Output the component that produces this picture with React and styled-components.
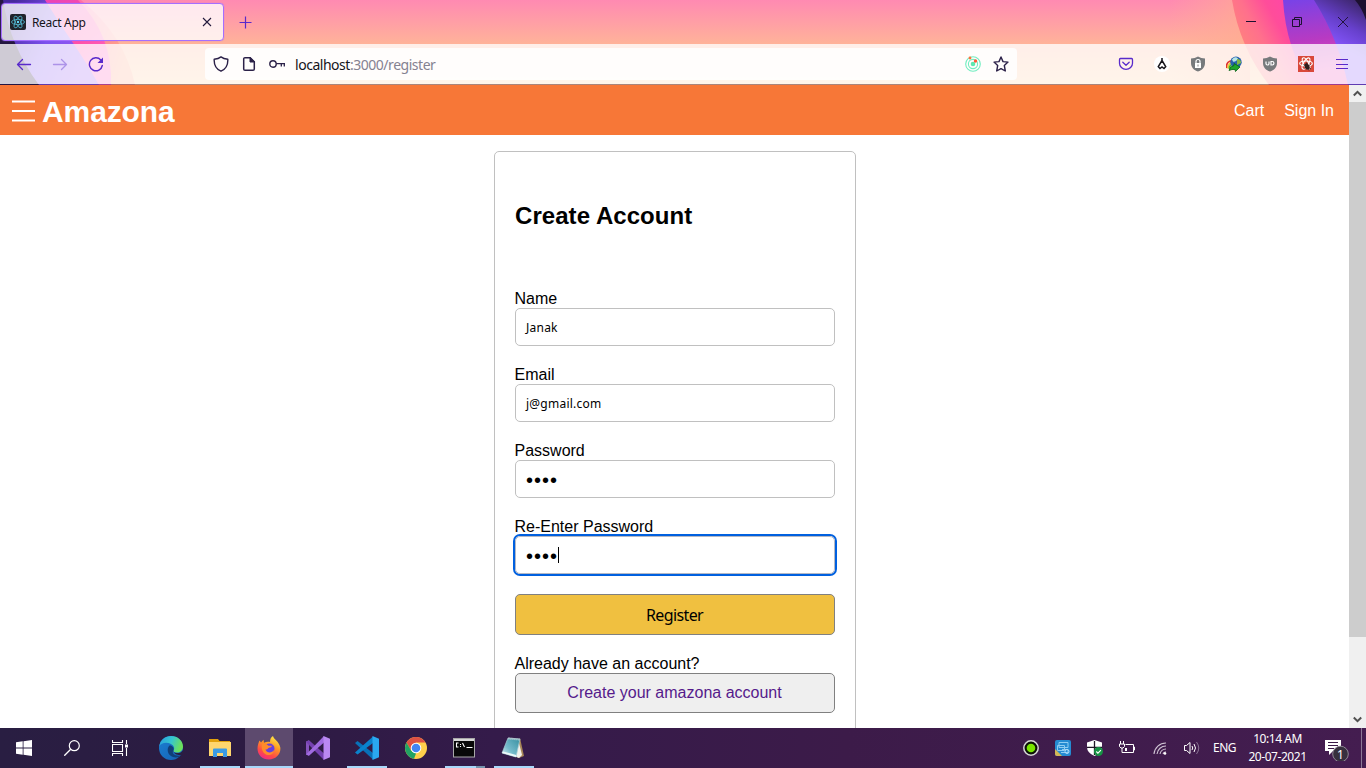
import React from "react";
import styled, { createGlobalStyle } from "styled-components";

const Global = createGlobalStyle`
  *, *::before, *::after { box-sizing: border-box; }
  html, body { margin: 0; padding: 0; overflow: hidden; }
  svg { display: block; flex: none; }
`;

const ui = `"Noto Sans", "Open Sans", sans-serif`;
const arial = `"Liberation Sans", Arial, sans-serif`;

const Screen = styled.div`
  width: 1366px;
  height: 768px;
  display: flex;
  flex-direction: column;
  overflow: hidden;
  background: #fff;
  font-family: ${arial};
`;

/* ---------- browser chrome ---------- */
const Chrome = styled.header`
  position: relative;
  height: 85px;
  flex: none;
  display: flex;
  flex-direction: column;
  font-family: ${ui};
  isolation: isolate;
`;
const Backdrop = styled.svg`
  position: absolute;
  inset: 0;
  z-index: -1;
`;
const TabStrip = styled.div`
  height: 44px;
  display: flex;
  align-items: center;
  padding-left: 1px;
`;
const Tab = styled.div`
  width: 223px;
  height: 38px;
  display: flex;
  align-items: center;
  padding: 0 10px 0 8px;
  border: 1px solid #a56eff;
  border-radius: 4px;
  background: rgba(255, 255, 255, 0.8);
  box-shadow: 0 0 1px #a56eff;
`;
const TabTitle = styled.span`
  flex: 1;
  margin-left: 6px;
  font-size: 12px;
  letter-spacing: -0.35px;
  color: #15141a;
`;
const NewTab = styled.div`
  margin-left: 15px;
`;
const WindowButtons = styled.div`
  margin-left: auto;
  display: flex;
`;
const WindowButton = styled.div`
  width: 46px;
  height: 44px;
  display: flex;
  align-items: center;
  justify-content: center;
`;
const Toolbar = styled.div`
  height: 41px;
  display: flex;
  align-items: center;
  padding: 0 8px;
  border-bottom: 1px solid rgba(40, 20, 70, 0.4);
  background: rgba(255, 255, 255, 0.78);
  background-clip: padding-box;
`;
const NavButtons = styled.div`
  display: flex;
  width: 197px;
`;
const NavButton = styled.div`
  width: 32px;
  height: 32px;
  margin-right: 4px;
  display: flex;
  align-items: center;
  justify-content: center;
  opacity: ${(p) => (p.$dim ? 0.4 : 1)};
`;
const AddressBar = styled.div`
  width: 812px;
  height: 32px;
  display: flex;
  align-items: center;
  padding: 0 8px;
  border-radius: 4px;
  background: rgba(255, 255, 255, 0.84);
`;
const IdentityIcons = styled.div`
  display: flex;
  gap: 12px;
  margin-right: 10px;
`;
const Url = styled.span`
  flex: 1;
  padding-top: 1px;
  font-size: 14px;
  letter-spacing: -0.47px;
  color: #15141a;
`;
const UrlPath = styled.span`
  color: #858291;
`;
const AddressActions = styled.div`
  display: flex;
  gap: 12px;
`;
const Extensions = styled.div`
  margin-left: auto;
  display: flex;
`;
const Extension = styled.div`
  width: 36px;
  height: 32px;
  display: flex;
  align-items: center;
  justify-content: center;
`;
const MenuButton = styled(Extension)`
  margin-right: -2px;
`;

/* ---------- page ---------- */
const Viewport = styled.div`
  flex: 1;
  min-height: 0;
  display: flex;
`;
const Page = styled.div`
  flex: 1;
  display: flex;
  flex-direction: column;
  overflow: hidden;
`;
const SiteHeader = styled.div`
  height: 50px;
  flex: none;
  display: flex;
  align-items: center;
  padding: 2px 15px 0 12px;
  background: #f77737;
  color: #fff;
`;
const Brand = styled.span`
  margin: 2px 0 0 7px;
  font-size: 30px;
  font-weight: bold;
  line-height: 36px;
  letter-spacing: -0.1px;
`;
const SiteLinks = styled.nav`
  margin-left: auto;
  display: flex;
  gap: 20px;
  font-size: 16px;
`;
const Main = styled.main`
  display: flex;
  justify-content: center;
  padding: 16px 0 0 1px;
`;
const Card = styled.form`
  width: 362px;
  height: 650px;
  flex: none;
  padding: 50px 20px 0;
  border: 1px solid #c0c0c0;
  border-radius: 5px;
  color: #000;
`;
const Title = styled.h1`
  margin: 0 0 60px;
  font-size: 24px;
  line-height: 28px;
  letter-spacing: 0.06px;
`;
const Field = styled.div`
  margin-bottom: 20px;
`;
const Label = styled.div`
  margin-left: -0.5px;
  font-size: 16px;
  line-height: 18px;
`;
const Input = styled.div`
  height: 38px;
  display: flex;
  align-items: center;
  padding: 0 10px;
  border: 1px solid ${(p) => (p.$focused ? "#b4b8c4" : "#c0c0c0")};
  border-radius: 5px;
  box-shadow: ${(p) => (p.$focused ? "0 0 0 2px #0060df" : "none")};
  font-family: ${ui};
  font-size: 12px;
  letter-spacing: 0.24px;
`;
const Dots = styled.span`
  padding-top: 1px;
  font-family: ${arial};
  font-size: 20px;
  line-height: 20px;
  letter-spacing: 1px;
`;
const Caret = styled.span`
  width: 1px;
  height: 16px;
  background: #000;
`;
const Button = styled.div`
  height: ${(p) => (p.$primary ? 41 : 40)}px;
  display: flex;
  align-items: center;
  justify-content: center;
  padding: ${(p) => (p.$primary ? "0 1px 0 0" : "0 1px 0 0")};
  border: 1px solid #808080;
  border-radius: 5px;
  background: ${(p) => (p.$primary ? "#f0c040" : "#efefef")};
  color: ${(p) => (p.$primary ? "#000" : "#551a8b")};
  font-family: ${(p) => (p.$primary ? ui : arial)};
  font-size: 16px;
  letter-spacing: ${(p) => (p.$primary ? "-0.6px" : "0")};
`;
const Scrollbar = styled.div`
  width: 17px;
  display: flex;
  flex-direction: column;
  justify-content: space-between;
  background: #f0f0f0;
`;
const ScrollArrow = styled.div`
  height: 17px;
  display: flex;
  align-items: center;
  justify-content: center;
`;
const Thumb = styled.div`
  height: 535px;
  margin-bottom: auto;
  background: #cdcdcd;
`;

/* ---------- taskbar ---------- */
const Taskbar = styled.footer`
  height: 40px;
  flex: none;
  display: flex;
  background: linear-gradient(90deg, #291e42 0%, #2c1b42 18%, #341b4a 36%, #3c1b49 62%, #441d50 100%);
  color: #fff;
  font-family: ${ui};
`;
const SystemButtons = styled.div`
  display: flex;
  margin-right: 3px;
`;
const Apps = styled.div`
  display: flex;
  gap: 1px;
`;
const TaskButton = styled.div`
  position: relative;
  width: 48px;
  height: 40px;
  display: flex;
  align-items: center;
  justify-content: center;
  background: ${(p) => (p.$active ? "#5d4a6e" : "transparent")};
`;
const Underline = styled.span`
  position: absolute;
  bottom: 0;
  left: ${(p) => (p.$full ? 0 : 4)}px;
  right: ${(p) => (p.$full ? 0 : 4)}px;
  height: 2px;
  background: ${(p) => (p.$stacked ? "linear-gradient(90deg, #a8d8fa 31px, #7593ad 31px)" : "#a8d8fa")};
`;
const Tray = styled.div`
  margin-left: auto;
  display: flex;
  align-items: center;
`;
const TrayItem = styled.div`
  width: ${(p) => p.$w || 32}px;
  height: 40px;
  display: flex;
  align-items: center;
  justify-content: center;
`;
const Language = styled.div`
  width: 35px;
  padding-bottom: 1px;
  text-align: center;
  font-size: 12px;
  letter-spacing: -0.5px;
`;
const Clock = styled.div`
  width: 71px;
  text-align: center;
  font-size: 12px;
  line-height: 18px;
  letter-spacing: -0.45px;
`;
const ShowDesktop = styled.div`
  width: 5px;
  height: 40px;
  border-left: 1px solid #8c7895;
`;

const ink = "#2b2148";
const violet = "#592acb";

const Svg = ({ s = 16, w = s, h = s, children, ...rest }) => (
  <svg width={w} height={h} viewBox={`0 0 ${w} ${h}`} fill="none" {...rest}>{children}</svg>
);

const ChromeArt = () => (
  <Backdrop width="1366" height="85" viewBox="0 0 1366 85">
    <defs>
      <linearGradient id="sky" x1="0" y1="0" x2="0" y2="1">
        <stop offset="0" stopColor="#ff8ab2" /><stop offset=".52" stopColor="#ffb399" /><stop offset="1" stopColor="#ffd0a0" />
      </linearGradient>
      <linearGradient id="salmonL" gradientUnits="userSpaceOnUse" x1="75" y1="30" x2="130" y2="50">
        <stop offset="0" stopColor="#ff6fa6" /><stop offset=".6" stopColor="#ff9290" /><stop offset="1" stopColor="#ffa988" />
      </linearGradient>
      <linearGradient id="pinkL" gradientUnits="userSpaceOnUse" x1="55" y1="0" x2="105" y2="60">
        <stop offset="0" stopColor="#ec45b4" /><stop offset=".6" stopColor="#ff4fa8" /><stop offset="1" stopColor="#ff62c0" />
      </linearGradient>
      <linearGradient id="violetL" gradientUnits="userSpaceOnUse" x1="5" y1="20" x2="90" y2="60">
        <stop offset="0" stopColor="#45289c" /><stop offset=".5" stopColor="#7c50ee" /><stop offset="1" stopColor="#9c5cf2" />
      </linearGradient>
      <linearGradient id="glow" x1="0" y1="0" x2="1" y2="0">
        <stop offset="0" stopColor="#ffad96" stopOpacity="0" /><stop offset="1" stopColor="#ffac90" stopOpacity=".8" />
      </linearGradient>
      <linearGradient id="salmonR" gradientUnits="userSpaceOnUse" x1="1238" y1="34" x2="1284" y2="8">
        <stop offset="0" stopColor="#ff7f80" /><stop offset=".35" stopColor="#ff708c" /><stop offset=".75" stopColor="#ff4d9a" /><stop offset="1" stopColor="#ff49a2" />
      </linearGradient>
      <linearGradient id="violetR" gradientUnits="userSpaceOnUse" x1="1295" y1="0" x2="1305" y2="75">
        <stop offset="0" stopColor="#7a42e6" /><stop offset=".55" stopColor="#b83ac2" /><stop offset="1" stopColor="#ed54bc" />
      </linearGradient>
      <linearGradient id="deepR" gradientUnits="userSpaceOnUse" x1="1358" y1="0" x2="1334" y2="44">
        <stop offset="0" stopColor="#3b2568" /><stop offset=".55" stopColor="#6740cc" /><stop offset="1" stopColor="#8455fa" />
      </linearGradient>
    </defs>
    <rect width="1366" height="85" fill="url(#sky)" />
    <path d="M0 0H81Q125 36 135 85H0Z" fill="url(#salmonL)" />
    <path d="M0 0H78Q113 36 111 85H0Z" fill="url(#pinkL)" />
    <path d="M0 0H45Q60 24 73 43T99 85H0Z" fill="url(#violetL)" />
    <path d="M0 0H3Q10 46 39 85H0Z" fill="#241640" />
    <rect x="1170" width="80" height="85" fill="url(#glow)" />
    <path d="M1232 0Q1240 48 1269 85H1366V0Z" fill="url(#salmonR)" />
    <path d="M1283 0Q1286 50 1311 85H1366V0Z" fill="url(#violetR)" />
    <path d="M1314 0Q1338 38 1348 85H1366V0Z" fill="url(#deepR)" />
    <path d="M1355 0Q1362 8 1366 20V0Z" fill="#1c1030" />
  </Backdrop>
);

const ReactIcon = () => (
  <Svg>
    <rect width="16" height="16" rx="2" fill="#20232a" />
    <g stroke="#53b9d2" strokeWidth=".8">
      <ellipse cx="8" cy="8" rx="6.5" ry="2.6" />
      <ellipse cx="8" cy="8" rx="6.5" ry="2.6" transform="rotate(60 8 8)" />
      <ellipse cx="8" cy="8" rx="6.5" ry="2.6" transform="rotate(120 8 8)" />
    </g>
    <circle cx="8" cy="8" r="1.2" fill="#61dafb" />
  </Svg>
);

const shieldPath = "M8 .6C10 1.9 12.500 2.400 15 2.500V7c0 4-3 7.500-7 8.600C4 14.500 1 11 1 7V2.500C3.500 2.400 6 1.900 8 .6Z";

function BrowserChrome() {
  return (
    <Chrome>
      <ChromeArt />
      <TabStrip>
        <Tab>
          <ReactIcon />
          <TabTitle>React App</TabTitle>
          <Svg s={12}><path d="M2 2l8 8M10 2l-8 8" stroke="#241a3c" strokeWidth="1.1" /></Svg>
        </Tab>
        <NewTab><Svg s={14}><path d="M6.500 1.500v12M.5 7.500h12" stroke={violet} strokeWidth="1.200" /></Svg></NewTab>
        <WindowButtons>
          <WindowButton><Svg s={10}><path d="M0 4.500h10" stroke="#1c1030" /></Svg></WindowButton>
          <WindowButton><Svg s={10}><path d="M.5 2.500h7v7h-7zM2.500 2.500v-2h7v7h-2" stroke="#1c1030" /></Svg></WindowButton>
          <WindowButton><Svg s={10}><path d="M0 0l10 10M10 0L0 10" stroke="#1c1030" strokeWidth=".9" /></Svg></WindowButton>
        </WindowButtons>
      </TabStrip>
      <Toolbar>
        <NavButtons>
          <NavButton><Svg><path d="M14.500 8.500H1.500M6.500 3.500l-5 5 5 5" stroke={violet} strokeWidth="1.300" strokeLinecap="round" strokeLinejoin="round" /></Svg></NavButton>
          <NavButton $dim><Svg><path d="M1.500 8.500h13M9.500 3.500l5 5-5 5" stroke={violet} strokeWidth="1.300" strokeLinecap="round" strokeLinejoin="round" /></Svg></NavButton>
          <NavButton><Svg><path d="M14.300 9.500A6.500 6.500 0 1 1 12.800 4" stroke={violet} strokeWidth="1.400" strokeLinecap="round" /><path d="M15 1.500V7H9.500Z" fill={violet} /></Svg></NavButton>
        </NavButtons>
        <AddressBar>
          <IdentityIcons>
            <Svg><path d="M8 .9C10 2.500 12 3 14.800 3.200c.3 5.500-1.800 10-6.800 12-5-2-7.100-6.500-6.800-12C4 3 6 2.500 8 .9Z" stroke={ink} strokeWidth="1.400" strokeLinejoin="round" /></Svg>
            <Svg><path d="M4 1.700h5.200l4.100 4.100v7.200a1.300 1.300 0 0 1-1.300 1.300H4A1.300 1.300 0 0 1 2.700 13V3A1.300 1.300 0 0 1 4 1.700Z" stroke={ink} strokeWidth="1.500" /><path d="M9 1.500V6h4.500Z" fill={ink} stroke={ink} /></Svg>
            <Svg><circle cx="4" cy="8" r="3.200" stroke={ink} strokeWidth="1.400" /><path d="M7.200 7.600H16M15.300 7.600V10.500M12.300 7.600V10.500" stroke={ink} strokeWidth="1.300" /></Svg>
          </IdentityIcons>
          <Url>localhost<UrlPath>:3000/register</UrlPath></Url>
          <AddressActions>
            <Svg>
              <g stroke="#72edc0" strokeWidth="1.100"><circle cx="8" cy="8" r="7.300" /><circle cx="8" cy="8" r="4.600" /></g>
              <circle cx="8" cy="8" r="2.300" fill="#5ee8b0" /><circle cx="5" cy="2" r="1.400" fill="#ff7139" /><circle cx="10.500" cy="5" r="1.700" fill="#ff5c3a" />
            </Svg>
            <Svg><path d="M8 1l2 4.600 5 .5-3.700 3.400 1 5.500L8 12.600 3.700 15l1-5.500L1 6.100l5-.5Z" stroke={ink} strokeWidth="1.400" strokeLinejoin="round" /></Svg>
          </AddressActions>
        </AddressBar>
        <Extensions>
          <Extension><Svg><path d="M2.500 2.500h11A1.200 1.200 0 0 1 14.500 3.700v3.500a6.500 6.200 0 0 1-13 0V3.700A1.200 1.200 0 0 1 2.500 2.500ZM4.800 6.300L8 9.300l3.200-3" stroke={violet} strokeWidth="1.300" strokeLinecap="round" strokeLinejoin="round" /></Svg></Extension>
          <Extension><Svg><circle cx="8" cy="8" r="8" fill="#fff" /><path d="M8 2v3M8 4.500L4.300 10.700 6 12.500 8 11l2 1.500 1.700-1.800L8 4.500" stroke="#17161c" strokeWidth="1.500" /></Svg></Extension>
          <Extension><Svg><path d={shieldPath} fill="#777a7c" /><rect x="5" y="7" width="6" height="5" fill="#fff" /><path d="M6 7V5.500a2 2 0 0 1 4 0V7" stroke="#fff" strokeWidth="1.200" /><path d="M8 8.500v2" stroke="#888" /></Svg></Extension>
          <Extension>
            <Svg>
              <path d="M.8 12C-.2 7 3 4 8 5" stroke="#df332d" strokeWidth="1.700" /><path d="M2.200 12.500C1.500 9 4 6 8 6.500" stroke="#efcb31" strokeWidth="1.700" />
              <path d="M3.500 13C3 10 5 8 8 8" stroke="#3aae3a" strokeWidth="1.700" />
              <circle cx="10" cy="6.300" r="5.700" fill="#2862ac" /><path d="M6 3.500q3-4 6-1-2 4-5 3Z" fill="#b6e4e8" /><path d="M11 3q4 0 4 4l-4 2Z" fill="#83ba45" />
              <path d="M3 14.500Q4 10 8 9.500V7.500l6 3.500-4.500 4.500-.5-2q-3-.5-6 1Z" fill="#20a52b" stroke="#096218" strokeWidth=".8" />
            </Svg>
          </Extension>
          <Extension><Svg><path d={shieldPath} fill="#777a7c" /><path d="M4 5.500v2a1.500 1.500 0 0 0 3 0v-2M9 5.500v3.500h1.200a1.700 1.700 0 0 0 0-3.500Z" stroke="#fff" strokeWidth="1.200" /></Svg></Extension>
          <Extension>
            <Svg>
              <rect width="16" height="16" fill="#d9483b" />
              <g stroke="#fff" strokeWidth="1.100"><ellipse cx="8" cy="7.500" rx="6.300" ry="2.500" /><ellipse cx="8" cy="7.500" rx="6.300" ry="2.500" transform="rotate(60 8 7.500)" /><ellipse cx="8" cy="7.500" rx="6.300" ry="2.500" transform="rotate(120 8 7.500)" /></g>
              <ellipse cx="9" cy="10.500" rx="2.300" ry="3.300" fill="#30201d" transform="rotate(-25 9 10.500)" /><path d="M5.500 8.500l7.500 4.500M6.500 12.500l6-4M8.500 6.500l2.500 8" stroke="#30201d" strokeWidth=".8" />
            </Svg>
          </Extension>
          <MenuButton><Svg><path d="M2 3.500h12M2 8.500h12M2 12.500h12" stroke={violet} strokeWidth="1.200" /></Svg></MenuButton>
        </Extensions>
      </Toolbar>
    </Chrome>
  );
}

function PageView() {
  return (
    <Viewport>
      <Page>
        <SiteHeader>
          <Svg w={23} h={22}><path d="M0 1.500h23M0 11h23M0 20.500h23" stroke="#fff" strokeWidth="1.900" /></Svg>
          <Brand>Amazona</Brand>
          <SiteLinks><span>Cart</span><span>Sign In</span></SiteLinks>
        </SiteHeader>
        <Main>
          <Card>
            <Title>Create Account</Title>
            <Field><Label>Name</Label><Input>Janak</Input></Field>
            <Field><Label>Email</Label><Input>j@gmail.com</Input></Field>
            <Field><Label>Password</Label><Input><Dots>••••</Dots></Input></Field>
            <Field><Label>Re-Enter Password</Label><Input $focused><Dots>••••</Dots><Caret /></Input></Field>
            <Field><Button $primary>Register</Button></Field>
            <Label>Already have an account?</Label>
            <Button>Create your amazona account</Button>
          </Card>
        </Main>
      </Page>
      <Scrollbar>
        <ScrollArrow><Svg s={9}><path d="M.8 6.500L4.500 2.800l3.700 3.700" stroke="#505050" strokeWidth="2" /></Svg></ScrollArrow>
        <Thumb />
        <ScrollArrow><Svg s={9}><path d="M.8 2.500l3.700 3.700 3.700-3.700" stroke="#505050" strokeWidth="2" /></Svg></ScrollArrow>
      </Scrollbar>
    </Viewport>
  );
}

const EdgeIcon = () => (
  <Svg s={24}>
    <defs>
      <linearGradient id="eg" x1="0" y1="0" x2="1" y2=".3"><stop stopColor="#279be0" /><stop offset=".55" stopColor="#36c6cf" /><stop offset="1" stopColor="#6be05c" /></linearGradient>
      <linearGradient id="eb" x1="0" y1="0" x2="1" y2="1"><stop stopColor="#1b7fd2" /><stop offset="1" stopColor="#1561b4" /></linearGradient>
    </defs>
    <circle cx="12" cy="12" r="12" fill="url(#eb)" />
    <path d="M.2 10.500C1.200 4 6.200 0 12 0c7 0 12 5 12 10.500 0 4-3 6-6 6-2.500 0-4-1-3.500-2 1.500-2 .5-5-2.500-6.500C8 5.800 2 6.500.2 10.500Z" fill="url(#eg)" />
    <path d="M10.500 9.500C7.500 12 8 19 14 21c3 1 6 .5 8.500-2-4 2-11-.5-8-5 1-2-1.500-5-4-4.500Z" fill="#103f78" />
    <path d="M14.500 14c-1 2 1 3 4 3 2.500 0 4.200-1 5.200-2.600L25 17l-2.500 2c-4 .5-8.500-1-8-5Z" fill="#291e42" />
  </Svg>
);
const FolderIcon = () => (
  <Svg w={22} h={20}>
    <path d="M0 1h9l1.500 2H21v15H0Z" fill="#e2a10c" /><path d="M0 4h22v14H0Z" fill="#ffd66e" />
    <path d="M4 19v-7.500a1 1 0 0 1 1-1h12a1 1 0 0 1 1 1V19h-4v-4H8v4Z" fill="#3c9be4" />
  </Svg>
);
const FirefoxIcon = () => (
  <Svg s={24}>
    <defs>
      <linearGradient id="ff" x1=".8" y1="0" x2=".3" y2="1"><stop stopColor="#fff04a" /><stop offset=".4" stopColor="#ff9a24" /><stop offset=".75" stopColor="#ff4a46" /><stop offset="1" stopColor="#f02b85" /></linearGradient>
    </defs>
    <path d="M2.500 4.500L4 6.500l2.500-2.700.5 3C9 5.500 11.500 5.500 13 6c0-3 1-5 3-6 .3 3 6 5 7.300 11.500.8 6.500-4.500 12-11.300 12S.5 19 .5 12.500C.5 9 1.500 7 2.500 4.500Z" fill="url(#ff)" />
    <circle cx="12.500" cy="12.500" r="5" fill="#6740df" />
    <path d="M5 8c3-.8 5 .3 6.500 1.800H15c-.5 2-3 1.500-4 2.700-.8 1.400-2.500 1-2.500 1 1 3.700 6.500 4 8.500.5-.4 4-3.500 5.500-6.500 5C6 18 4 13 5 8Z" fill="#ff8b2a" />
  </Svg>
);
const CodeIcon = () => (
  <Svg s={24}>
    <path d="M0 7l2.500-2L18 17v6.500Z" fill="#0871b8" />
    <path d="M0 16.500l2.500 2L18 7V.5Z" fill="#0a82cc" />
    <path d="M17.500 0L24 2.700v18.600L17.500 24Z" fill="#2aa8f0" />
  </Svg>
);
const VisualStudioIcon = () => (
  <Svg s={24}>
    <path d="M0 5.500L3 4.300v15.400L0 18.500Z" fill="#8653bd" />
    <path d="M3 4.300L18 17.500V24L0 6Z" fill="#7541b1" /><path d="M0 18.500l3 1.200L18 6.500V0Z" fill="#a06be0" />
    <path d="M17.500 0L24 2.700v18.600L17.500 24Z" fill="#ba88f2" />
  </Svg>
);
const ChromeIcon = () => (
  <Svg s={22}>
    <circle cx="11" cy="11" r="11" fill="#ffd04b" />
    <path d="M1.500 5.500A11 11 0 0 1 20.500 5.500H11L6.200 13.700Z" fill="#dd5144" />
    <path d="M1.500 5.500l4.700 8.300L11 16.500l-2 5.300A11 11 0 0 1 1.500 5.500Z" fill="#21a364" />
    <circle cx="11" cy="11" r="5.300" fill="#fff" /><circle cx="11" cy="11" r="4.300" fill="#4285f4" />
  </Svg>
);
const TerminalIcon = () => (
  <Svg w={24} h={20}>
    <rect x=".5" y=".5" width="21" height="18.500" fill="#080808" stroke="#a8a8a8" /><path d="M1 2h20" stroke="#d8d8d8" strokeWidth="2" />
    <path d="M5.500 5H3.500v4h2M7.500 6v1M7.500 8v1M9.500 5l2 4M13.500 9.500h6" stroke="#fff" strokeWidth="1.100" />
  </Svg>
);
const NotepadIcon = () => (
  <Svg w={26} h={24}>
    <defs><linearGradient id="np" x1="1" y1="0" x2="0" y2="1"><stop stopColor="#348e9f" /><stop offset=".6" stopColor="#75bacb" /><stop offset="1" stopColor="#e4f4f6" /></linearGradient></defs>
    <path d="M19 2l4 18-5 2-5-2Z" fill="#a78758" /><path d="M17 3l4 16-3 3-8-3Z" fill="#f3f1ec" />
    <path d="M7 2l12 1-4 18L1 17Z" fill="url(#np)" stroke="#a9ced6" strokeWidth=".7" /><path d="M1 17l14 4 .3-2L2 15.500Z" fill="#edf8fa" />
    <path d="M7.500 2.500l11 1" stroke="#d1dadd" strokeWidth="2" strokeDasharray="1 1" />
  </Svg>
);

function TaskbarView() {
  return (
    <Taskbar>
      <SystemButtons>
        <TaskButton><Svg><path d="M0 2.300L6.700 1.300V7.600H0ZM7.500 1.200L16 0V7.600H7.500ZM0 8.400H6.700V14.700L0 13.700ZM7.500 8.400H16V16L7.500 14.800Z" fill="#fff" /></Svg></TaskButton>
        <TaskButton><Svg><circle cx="10.300" cy="5.700" r="5" stroke="#fff" strokeWidth="1.200" /><path d="M6.700 9.300L.3 15.700" stroke="#fff" strokeWidth="1.300" /></Svg></TaskButton>
        <TaskButton><Svg><path d="M.5 0v2.500h10V0M.5 16v-2.500h10V16M.5 4.500h10v7H.5ZM14.500 0v4M14.500 8v8" stroke="#fff" strokeWidth="1.100" /><rect x="13" y="4.500" width="3" height="3" fill="#fff" /></Svg></TaskButton>
      </SystemButtons>
      <Apps>
        <TaskButton><EdgeIcon /></TaskButton>
        <TaskButton><FolderIcon /><Underline /></TaskButton>
        <TaskButton $active><FirefoxIcon /><Underline $full /></TaskButton>
        <TaskButton><VisualStudioIcon /></TaskButton>
        <TaskButton><CodeIcon /><Underline /></TaskButton>
        <TaskButton><ChromeIcon /></TaskButton>
        <TaskButton><TerminalIcon /><Underline $stacked /></TaskButton>
        <TaskButton><NotepadIcon /><Underline /></TaskButton>
      </Apps>
      <Tray>
        <TrayItem><Svg><circle cx="8" cy="8" r="7.200" fill="#0c1206" stroke="#d8d8d8" strokeWidth="1.500" /><circle cx="8" cy="8" r="4.300" fill="#79e600" /></Svg></TrayItem>
        <TrayItem><Svg><rect width="16" height="16" rx="2" fill="#258bd2" /><path d="M0 9l7 7H2a2 2 0 0 1-2-2Z" fill="#d3b657" /><path d="M4 2.500h9v5H4ZM2.500 5.500h7v5h-7ZM7 9.500h6v3M6 12.500h7" stroke="#8fcdf2" /><circle cx="12" cy="11.500" r="2" stroke="#b1ddfa" /></Svg></TrayItem>
        <TrayItem><Svg><path d="M7.500 0L15 2.500V7q0 6-7.500 9Q0 13 0 7V2.500Z" fill="#fff" /><path d="M7.500 1v14M0 7.300h15" stroke="#1f1626" strokeWidth="1.300" /><circle cx="11.500" cy="11.500" r="4.500" fill="#169344" /><path d="M9.300 11.500l1.600 1.600 3-3" stroke="#fff" strokeWidth="1.100" /></Svg></TrayItem>
        <TrayItem><Svg><path d="M6.500 4.500h8v8h-9M14.500 7h1v3h-1M1.500 1v3M4.500 1v3M.5 4h5v2.500L4 8H2L.5 6.500ZM3 8v4.500h3" stroke="#fff" /><path d="M6 8h2v3H6Z" fill="#fff" /></Svg></TrayItem>
        <TrayItem $w={33}><Svg w={14} h={16}><path d="M1 14A12 12 0 0 1 13 3M4 14a9 9 0 0 1 9-8M7 14a6 6 0 0 1 6-5M10 14a3 3 0 0 1 3-2" stroke="#d0c5d5" strokeWidth="1.100" /><circle cx="12" cy="13.500" r="1.300" fill="#fff" /></Svg></TrayItem>
        <TrayItem $w={31}><Svg><path d="M.5 5.500h2L6 2.500v11l-3.500-3h-2Z" stroke="#fff" /><path d="M8 6q1.500 2 0 4M10 4q3 4 0 8" stroke="#fff" /><path d="M12.500 2q4.500 6 0 12" stroke="#8b7495" /></Svg></TrayItem>
        <Language>ENG</Language>
        <Clock>10:14 AM<br />20-07-2021</Clock>
        <TrayItem $w={48}>
          <Svg w={26} h={26}>
            <path d="M1 5h16v11H9l-4 4v-4H1Z" fill="#fff" /><path d="M4 7.500h10M4 10.500h10M4 13.500h6" stroke="#3c1b49" />
            <circle cx="16.500" cy="19" r="7.800" fill="#37303e" stroke="#8e8794" />
            <text x="16.500" y="23.500" textAnchor="middle" fill="#fff" fontSize="12" fontFamily="Noto Sans, sans-serif">1</text>
          </Svg>
        </TrayItem>
        <ShowDesktop />
      </Tray>
    </Taskbar>
  );
}

export default function App() {
  return (
    <Screen>
      <Global />
      <BrowserChrome />
      <PageView />
      <TaskbarView />
    </Screen>
  );
}
